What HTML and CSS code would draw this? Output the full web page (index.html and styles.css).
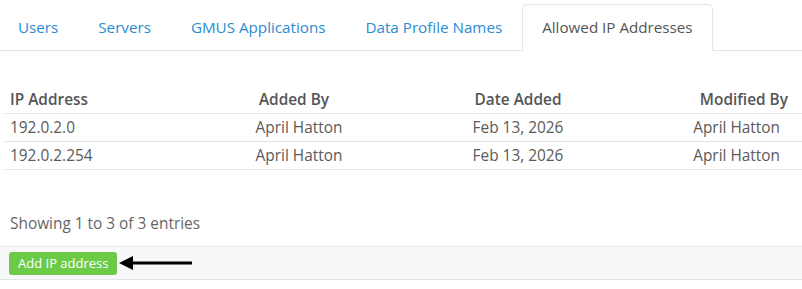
FILE: index.html
```html
<!DOCTYPE html>
<html lang="en">
<head>
    <meta charset="UTF-8">
    <meta name="viewport" content="width=device-width, initial-scale=1.0">
    <title>Allowed IP Addresses</title>
    <link rel="stylesheet" href="styles.css">
</head>
<body>
    <ul class="tabs">
        <li><a href="#">Users</a></li>
        <li><a href="#">Servers</a></li>
        <li><a href="#">GMUS Applications</a></li>
        <li><a href="#">Data Profile Names</a></li>
        <li class="active"><a href="#">Allowed IP Addresses</a></li>
    </ul>

    <div class="tab-content">
        <table class="ip-table">
            <thead>
                <tr>
                    <th class="col-ip">IP Address</th>
                    <th class="col-added">Added By</th>
                    <th class="col-date">Date Added</th>
                    <th class="col-mod">Modified By</th>
                </tr>
            </thead>
            <tbody>
                <tr>
                    <td class="col-ip">192.0.2.0</td>
                    <td class="col-added">April Hatton</td>
                    <td class="col-date">Feb 13, 2026</td>
                    <td class="col-mod">April Hatton</td>
                </tr>
                <tr>
                    <td class="col-ip">192.0.2.254</td>
                    <td class="col-added">April Hatton</td>
                    <td class="col-date">Feb 13, 2026</td>
                    <td class="col-mod">April Hatton</td>
                </tr>
            </tbody>
        </table>

        <div class="table-info">Showing 1 to 3 of 3 entries</div>

        <div class="table-footer">
            <button class="btn-add">Add IP address</button>
            <svg class="arrow" width="74" height="16" viewBox="0 0 74 16">
                <polygon points="0,8 14,1 14,15" fill="#000"/>
                <rect x="12" y="6.5" width="61" height="3" fill="#000"/>
            </svg>
        </div>
    </div>
</body>
</html>
```

FILE: styles.css
```css
body {
    margin: 0;
    font-family: "Open Sans", "DejaVu Sans", sans-serif;
    color: #555;
    background: #fff;
}
.tabs {
    list-style: none;
    margin: 4px 0 0 0;
    padding: 0;
    display: flex;
    border-bottom: 1px solid #e4e4e4;
}
.tabs li {
    margin-bottom: -1px;
}
.tabs li:first-child {
    margin-left: -2px;
}
.tabs a {
    display: block;
    padding: 12px 19px;
    line-height: 21px;
    font-size: 15.2px;
    color: #2b8bd1;
    text-decoration: none;
    border: 1px solid transparent;
    border-radius: 5px 5px 0 0;
}
.tabs li.active a {
    color: #555;
    background: #fff;
    border-color: #e4e4e4 #e4e4e4 #fff;
}
.tab-content {
    padding-top: 35px;
}
.ip-table {
    width: 797px;
    margin-left: 5px;
    border-collapse: collapse;
    table-layout: fixed;
    font-size: 15.4px;
}
.ip-table th,
.ip-table td {
    padding: 3px 5px;
    line-height: 21px;
    border-bottom: 1px solid #e4e4e4;
    white-space: nowrap;
}
.ip-table th {
    font-weight: 600;
    color: #555;
}
.ip-table td {
    color: #5a5a5a;
}
.col-ip { width: 190px; text-align: left; }
.col-added { width: 174px; text-align: center; }
th.col-added { padding: 3px 8px 3px 2px; }
td.col-added { padding: 3px 3px 3px 7px; }
.col-date { width: 248px; text-align: center; }
.col-mod { text-align: right; }
th.col-mod { padding-right: 14px; }
td.col-mod { padding-right: 22px; }
.table-info {
    margin: 44px 0 0 10px;
    font-size: 15.4px;
    line-height: 20px;
    color: #666;
}
.table-footer {
    margin-top: 12px;
    display: flex;
    align-items: center;
    height: 32px;
    padding: 0 9px;
    background: #f7f8fa;
    border-top: 1px solid #e8e9eb;
    border-bottom: 1px solid #e3e4e6;
}
.btn-add {
    height: 23px;
    padding: 0 9px;
    border: none;
    border-radius: 3px;
    background: #6ccb46;
    color: #fff;
    font-family: "Open Sans", "DejaVu Sans", sans-serif;
    font-size: 13px;
    cursor: pointer;
}
.arrow {
    margin-left: 2px;
    display: block;
}
```
